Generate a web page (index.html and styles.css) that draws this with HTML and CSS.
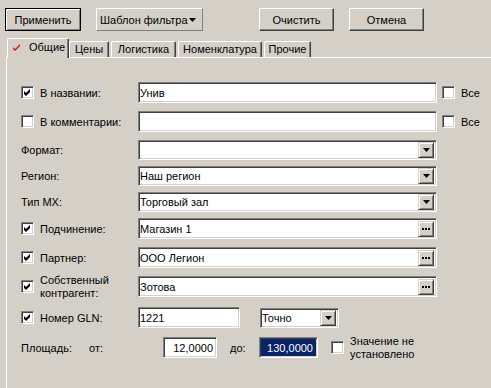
FILE: index.html
```html
<!DOCTYPE html>
<html lang="ru">

<head>
    <meta charset="UTF-8">
    <title>Фильтр</title>
    <link rel="stylesheet" href="styles.css">
</head>

<body>

    <div class="toolbar">
        <button class="btn btn-default btn-apply">Применить</button>
        <button class="btn btn-menu">
            <span>Шаблон фильтра</span>
            <svg class="arrow" width="7" height="4" viewBox="0 0 7 4"><polygon points="0,0 7,0 3.5,4" /></svg>
        </button>
        <button class="btn btn-clear">Очистить</button>
        <button class="btn btn-cancel">Отмена</button>
    </div>

    <div class="tabs">
        <div class="tab tab-active tab-general">
            <svg class="red-check" width="8" height="7" viewBox="0 0 8 7"><polygon points="0,3 2,5 7,0 7,2 2,7 0,5" /></svg>
            <span>Общие</span>
        </div>
        <div class="tab tab-prices">Цены</div>
        <div class="tab tab-logistics">Логистика</div>
        <div class="tab tab-nomen">Номенклатура</div>
        <div class="tab tab-other">Прочие</div>
    </div>

    <div class="panel">

        <!-- В названии -->
        <div class="row">
            <label class="field-label">
                <span class="check checked"><svg width="9" height="9" viewBox="0 0 9 9"><polygon points="1,3 3,5 7,1 7,4 3,8 1,6" /></svg></span>
                В названии:
            </label>
            <div class="text-input wide">Унив</div>
            <span class="check all-check"></span>
            <span class="all-label">Все</span>
        </div>

        <div class="row">
            <label class="field-label">
                <span class="check"></span>
                В комментарии:
            </label>
            <div class="text-input wide"></div>
            <span class="check all-check"></span>
            <span class="all-label">Все</span>
        </div>

        <div class="row row-combo">
            <label class="field-label">Формат:</label>
            <div class="text-input combo wide">
                <span class="value"></span>
                <span class="side-btn"><svg width="7" height="4" viewBox="0 0 7 4"><polygon points="0,0 7,0 3.5,4" /></svg></span>
            </div>
        </div>

        <div class="row row-combo">
            <label class="field-label">Регион:</label>
            <div class="text-input combo wide">
                <span class="value">Наш регион</span>
                <span class="side-btn"><svg width="7" height="4" viewBox="0 0 7 4"><polygon points="0,0 7,0 3.5,4" /></svg></span>
            </div>
        </div>

        <div class="row row-combo">
            <label class="field-label">Тип МХ:</label>
            <div class="text-input combo wide">
                <span class="value">Торговый зал</span>
                <span class="side-btn"><svg width="7" height="4" viewBox="0 0 7 4"><polygon points="0,0 7,0 3.5,4" /></svg></span>
            </div>
        </div>

        <div class="row">
            <label class="field-label">
                <span class="check checked"><svg width="9" height="9" viewBox="0 0 9 9"><polygon points="1,3 3,5 7,1 7,4 3,8 1,6" /></svg></span>
                Подчинение:
            </label>
            <div class="text-input wide">
                <span class="value">Магазин 1</span>
                <span class="side-btn"><svg width="8" height="2" viewBox="0 0 8 2"><rect x="0" y="0" width="2" height="2" /><rect x="3" y="0" width="2" height="2" /><rect x="6" y="0" width="2" height="2" /></svg></span>
            </div>
        </div>

        <div class="row">
            <label class="field-label">
                <span class="check checked"><svg width="9" height="9" viewBox="0 0 9 9"><polygon points="1,3 3,5 7,1 7,4 3,8 1,6" /></svg></span>
                Партнер:
            </label>
            <div class="text-input wide">
                <span class="value">ООО Легион</span>
                <span class="side-btn"><svg width="8" height="2" viewBox="0 0 8 2"><rect x="0" y="0" width="2" height="2" /><rect x="3" y="0" width="2" height="2" /><rect x="6" y="0" width="2" height="2" /></svg></span>
            </div>
        </div>

        <div class="row row-gap-10">
            <label class="field-label">
                <span class="check checked"><svg width="9" height="9" viewBox="0 0 9 9"><polygon points="1,3 3,5 7,1 7,4 3,8 1,6" /></svg></span>
                <span class="two-lines">Собственный<br>контрагент:</span>
            </label>
            <div class="text-input wide">
                <span class="value">Зотова</span>
                <span class="side-btn"><svg width="8" height="2" viewBox="0 0 8 2"><rect x="0" y="0" width="2" height="2" /><rect x="3" y="0" width="2" height="2" /><rect x="6" y="0" width="2" height="2" /></svg></span>
            </div>
        </div>

        <div class="row row-gap-9">
            <label class="field-label">
                <span class="check checked"><svg width="9" height="9" viewBox="0 0 9 9"><polygon points="1,3 3,5 7,1 7,4 3,8 1,6" /></svg></span>
                Номер GLN:
            </label>
            <div class="text-input gln">1221</div>
            <div class="text-input combo match">
                <span class="value">Точно</span>
                <span class="side-btn"><svg width="7" height="4" viewBox="0 0 7 4"><polygon points="0,0 7,0 3.5,4" /></svg></span>
            </div>
        </div>

        <div class="row">
            <span class="area-label">Площадь:</span>
            <span class="from-label">от:</span>
            <div class="text-input number from-input">12,0000</div>
            <span class="to-label">до:</span>
            <div class="text-input number to-input selected">130,0000</div>
            <span class="check unset-check"></span>
            <span class="two-lines unset-label">Значение не<br>установлено</span>
        </div>

    </div>

</body>

</html>
```

FILE: styles.css
```css
body {
    margin: 0;
    width: 491px;
    height: 388px;
    overflow: hidden;
    background-color: #d4d0c8;
    font-family: "Liberation Sans", Arial, sans-serif;
    font-size: 11px;
    color: #000;
}

/* top buttons */

.toolbar {
    display: flex;
    padding: 8px 0 0 5px;
}

.btn {
    box-sizing: border-box;
    height: 23px;
    padding: 0;
    font: inherit;
    color: #000;
    background-color: #d4d0c8;
    border: 1px solid;
    border-color: #fff #404040 #404040 #fff;
    box-shadow: inset -1px -1px #808080;
}

.btn-default {
    border-color: #000;
    box-shadow: inset 1px 1px #fff, inset -1px -1px #808080;
}

.btn-apply {
    width: 76px;
    margin-right: 15px;
}

.btn-menu {
    width: 107px;
    margin-right: 56px;
    display: flex;
    align-items: center;
    justify-content: space-between;
    padding: 0 6px 0 3px;
    border-color: #fff #808080 #808080 #fff;
    box-shadow: none;
}

.btn-clear {
    width: 75px;
    margin-right: 15px;
}

.btn-cancel {
    width: 75px;
}

.arrow {
    display: block;
}

/* tabs */

.tabs {
    position: relative;
    z-index: 1;
    display: flex;
    align-items: flex-end;
    height: 19px;
    margin: 7px 0 0 7px;
}

.tab {
    box-sizing: border-box;
    height: 16px;
    margin-right: 2px;
    border: 1px solid;
    border-bottom: none;
    border-color: #fff #404040 transparent #fff;
    border-radius: 2px 2px 0 0;
    box-shadow: inset -1px 0 #808080;
    background-color: #d4d0c8;
    text-align: center;
    line-height: 15px;
}

.tab-active {
    height: 20px;
    margin-bottom: -1px;
    margin-right: 0;
    display: flex;
    align-items: center;
    padding: 0 0 2px 5px;
}

.red-check {
    fill: #e01010;
    margin-right: 8px;
}

.tab-general { width: 62px; }
.tab-prices { width: 40px; }
.tab-logistics { width: 65px; }
.tab-nomen { width: 84px; }
.tab-other { width: 47px; }

/* panel */

.panel {
    box-sizing: border-box;
    height: 331px;
    margin-left: 6px;
    padding: 24px 0 0 14px;
    border-top: 1px solid #fff;
    border-left: 1px solid #fff;
}

.row {
    display: flex;
    align-items: center;
    height: 21px;
    margin-bottom: 8px;
}

.row-combo {
    height: 20px;
    margin-bottom: 6px;
}

.row-gap-10 {
    margin-bottom: 10px;
}

.row-gap-9 {
    margin-bottom: 9px;
}

.field-label {
    display: flex;
    align-items: center;
    width: 117px;
    flex-shrink: 0;
}

.two-lines {
    line-height: 13px;
}

/* checkboxes */

.check {
    box-sizing: border-box;
    display: flex;
    align-items: center;
    justify-content: center;
    width: 13px;
    height: 13px;
    margin-right: 6px;
    flex-shrink: 0;
    background-color: #fff;
    border: 1px solid;
    border-color: #808080 #fff #fff #808080;
    box-shadow: inset 1px 1px #404040, inset -1px -1px #d4d0c8;
}

.check svg {
    display: block;
    fill: #000;
}

.all-check {
    margin-left: 5px;
}

/* inputs */

.text-input {
    box-sizing: border-box;
    display: flex;
    align-items: center;
    height: 21px;
    padding: 0 1px;
    background-color: #fff;
    border: 1px solid;
    border-color: #808080 #fff #fff #808080;
    box-shadow: inset 1px 1px #404040, inset -1px -1px #d4d0c8;
    white-space: nowrap;
    overflow: hidden;
}

.text-input.wide {
    width: 299px;
}

.combo {
    height: 20px;
}

.value {
    flex: 1;
}

.side-btn {
    box-sizing: border-box;
    display: flex;
    align-items: center;
    justify-content: center;
    width: 16px;
    height: 16px;
    margin-right: 1px;
    background-color: #d4d0c8;
    border: 1px solid;
    border-color: #d4d0c8 #404040 #404040 #d4d0c8;
    box-shadow: inset 1px 1px #fff, inset -1px -1px #808080;
}

.side-btn svg {
    display: block;
    fill: #000;
}

.gln {
    width: 102px;
    margin-right: 20px;
}

.match {
    width: 79px;
}

/* area row */

.area-label {
    width: 68px;
}

.from-label {
    width: 74px;
}

.number {
    justify-content: flex-end;
    padding-right: 3px;
}

.from-input {
    width: 54px;
    margin-right: 13px;
}

.to-label {
    width: 29px;
}

.to-input {
    width: 59px;
    margin-right: 13px;
    padding-right: 4px;
}

.selected {
    background-color: #0a246a;
    color: #fff;
}

.unset-check {
    margin-right: 6px;
}
```
